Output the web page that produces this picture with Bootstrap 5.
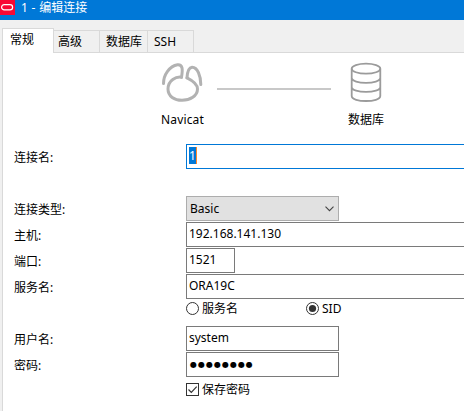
<!DOCTYPE html>
<html lang="zh-CN">
<head>
<meta charset="utf-8">
<meta name="viewport" content="width=device-width, initial-scale=1">
<title>1 - 编辑连接</title>
<link href="https://cdn.jsdelivr.net/npm/bootstrap@5.3.0/dist/css/bootstrap.min.css" rel="stylesheet">
<style>
body{width:464px;height:411px;background:#f0f0f0;color:#000;font:12px/16px "Noto Sans","Noto Sans CJK SC",sans-serif}
.titlebar{height:20px;background:#0078d7;color:#fff;line-height:16px}
.app-logo{width:15px;height:15px;background:#f80834}
.title-text{margin-left:6px;word-spacing:.6px}
.tabstrip{height:33px;padding-left:2px;margin-bottom:-1px}
.tabstrip .nav-link{height:23px;padding:0 0 0 4px;border:1px solid #d9d9d9;border-left:0;border-radius:0;color:#000;background:#f0f0f0;line-height:22px}
.tabstrip .nav-link.active{height:25px;width:52px;padding-left:7px;border:1px solid #d9d9d9;border-bottom:0;background:#fff;line-height:22px;position:relative}
.w-a{width:46px}.w-b{width:48px}.w-c{width:46px}
.w-b.nav-link,.w-c.nav-link{padding-left:6px}
.pane{height:359px;margin-left:2px;border-top:1px solid #d9d9d9;border-left:1px solid #d9d9d9;background:#fff}
.diagram{height:91px;padding:9px 0 0 149px}
.node{width:60px}
.node svg{display:block;height:44px}
.cap{line-height:16px;margin-top:6px}
.cap-client{padding-left:9px;letter-spacing:.15px}
.cap-db{padding-left:13px}
.wire{width:114px;height:2px;margin:26px 0 0 5px;background:#c8c8c8}
.field{height:25px;margin-bottom:1px}
.field-label{width:183px;padding-left:11px;line-height:27px}
.box{height:25px;border:1px solid #7a7a7a;padding-left:2px;line-height:22px;background:#fff}
.w-std{width:153px}.w-port{width:49px}
.box.focus{border-color:#0078d7}
.sel{display:inline-block;height:17px;width:8px;margin:2px 0 0;line-height:17px;background:#0078d7;color:#fff;border-right:1px solid #ff8728}
.box.drop{border-color:#adadad;background:#e1e1e1;padding:0 4px 0 3px;line-height:23px}
.box.dots{font:8px/23px "DejaVu Sans",sans-serif;letter-spacing:1px;padding-left:3px}
.lat{letter-spacing:0}
.opts{height:19px;padding-left:183px;margin-bottom:8px}
.opt{gap:3px;line-height:18px}
.opt-first{width:120px}
.gap-name{margin-bottom:27px}
</style>
</head>
<body class="overflow-hidden">
<div class="titlebar d-flex">
  <svg class="app-logo flex-shrink-0" viewBox="0 0 15 15"><rect x="1.6" y="4.6" width="11" height="5.2" rx="2.6" fill="none" stroke="#fff" stroke-width="1.2"/></svg>
  <span class="title-text">1 - 编辑连接</span>
</div>
<nav class="nav tabstrip align-items-end flex-nowrap">
  <a class="nav-link active">常规</a>
  <a class="nav-link w-a">高级</a>
  <a class="nav-link w-b">数据库</a>
  <a class="nav-link w-c">SSH</a>
</nav>
<main class="pane overflow-hidden">
  <div class="diagram d-flex">
    <div class="node">
      <svg width="60" height="44" viewBox="152 62 60 44" fill="none" stroke="#b2b2b2" stroke-width="3" stroke-linecap="round" stroke-linejoin="round">
        <path d="M181.500 77.200C176 76.500 168.200 80 168 89C168 96.500 174.500 100.300 182 100.300C190 100.300 197.500 96 197.500 89C197.500 84 192.500 80.500 187 77.800"/>
        <path d="M163.500 83.500C163.500 75 169.500 66 177.500 64.800C182.500 64.300 183 69 181.500 77.200"/>
        <path d="M187 77.800C187.300 73 188.500 67.500 192 67.200C197.500 67 200.800 76 200.800 84.500"/>
      </svg>
      <div class="cap cap-client">Navicat</div>
    </div>
    <div class="wire"></div>
    <div class="node ms-1">
      <svg width="60" height="44" viewBox="335 62 60 44" fill="none" stroke="#9b9b9b" stroke-width="1.8">
        <ellipse cx="366" cy="68.700" rx="14.300" ry="5"/>
        <path d="M351.700 68.700V96C351.700 102.700 380.300 102.700 380.300 96V68.700M351.700 77.800C351.700 84.500 380.300 84.500 380.300 77.800M351.700 86.900C351.700 93.600 380.300 93.600 380.300 86.900"/>
      </svg>
      <div class="cap cap-db text-nowrap">数据库</div>
    </div>
  </div>
  <div class="field gap-name d-flex"><div class="field-label">连接名:</div><div class="box focus flex-grow-1 border-end-0"><span class="sel">1</span></div></div>
  <div class="field d-flex"><div class="field-label">连接类型:</div>
    <div class="box drop w-std d-flex justify-content-between align-items-center"><span>Basic</span>
      <svg width="9" height="6" viewBox="0 0 9 6" fill="none" stroke="#444" stroke-width="1.1"><path d="M.5.7L4.500 4.700L8.500.7"/></svg></div>
  </div>
  <div class="field d-flex"><div class="field-label">主机:</div><div class="box lat flex-grow-1 border-end-0">192.168.141.130</div></div>
  <div class="field d-flex"><div class="field-label">端口:</div><div class="box w-port">1521</div></div>
  <div class="field d-flex mb-0"><div class="field-label">服务名:</div><div class="box flex-grow-1 border-end-0">ORA19C</div></div>
  <div class="opts d-flex align-items-center">
    <div class="opt opt-first d-flex align-items-center">
      <svg width="13" height="13"><circle cx="6.500" cy="6.500" r="6" fill="#fff" stroke="#333"/></svg><span>服务名</span></div>
    <div class="opt d-flex align-items-center">
      <svg width="13" height="13"><circle cx="6.500" cy="6.500" r="6" fill="#fff" stroke="#333"/><circle cx="6.500" cy="6.500" r="3.600" fill="#333"/></svg><span>SID</span></div>
  </div>
  <div class="field d-flex"><div class="field-label">用户名:</div><div class="box w-std">system</div></div>
  <div class="field d-flex"><div class="field-label">密码:</div><div class="box w-std dots">●●●●●●●●</div></div>
  <div class="opts opt d-flex align-items-center pt-1">
    <svg width="13" height="13" fill="none" stroke="#333"><rect x=".5" y=".5" width="12" height="12" fill="#fff"/><path d="M2.500 6.500L5.300 9.300L10.700 3.700" stroke-width="1.200"/></svg><span>保存密码</span></div>
</main>
<script src="https://cdn.jsdelivr.net/npm/bootstrap@5.3.0/dist/js/bootstrap.bundle.min.js"></script>
</body>
</html>
